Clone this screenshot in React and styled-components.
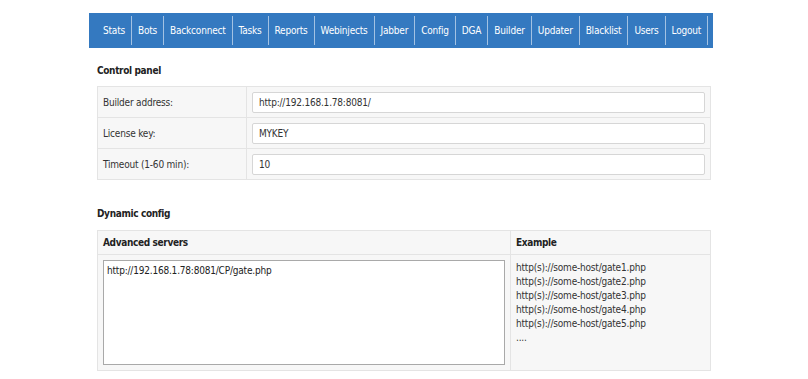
import React from "react";
import styled, { createGlobalStyle } from "styled-components";

const Global = createGlobalStyle`
  html, body { margin: 0; padding: 0; background: #fff; }
  body {
    font-family: "DejaVu Sans Condensed", "DejaVu Sans", sans-serif;
    font-size: 10px;
    letter-spacing: -0.2px;
    color: #333;
  }
`;

const Page = styled.div`
  width: 624px;
  margin: 13px 0 0 89px;
`;

const Nav = styled.nav`
  display: flex;
  align-items: center;
  height: 35px;
  padding: 0 2px 0 8px;
  background: #3479c0;
`;

const NavItem = styled.a`
  display: flex;
  align-items: center;
  height: 29px;
  padding: 0 6px;
  color: #fff;
  font-size: 10px;
  letter-spacing: -0.2px;
  text-decoration: none;
  border-right: 1px solid rgba(255, 255, 255, 0.55);
  white-space: nowrap;
`;

const Content = styled.div`
  padding: 0 2px 0 8px;
`;

const Heading = styled.div`
  font-weight: bold;
  letter-spacing: -0.35px;
  color: #222;
  padding: ${(p) => p.$pad};
`;

const FormTable = styled.div`
  display: grid;
  grid-template-columns: 149px 1fr;
  border: 1px solid #e4e4e4;
  background: #f7f7f7;
`;

const Label = styled.div`
  display: flex;
  align-items: center;
  height: 30px;
  padding: 0 5px;
  border-right: 1px solid #e4e4e4;
  border-bottom: ${(p) => (p.$last ? "none" : "1px solid #e4e4e4")};
`;

const Field = styled.div`
  display: flex;
  align-items: center;
  height: 30px;
  padding: 0 5px;
  border-bottom: ${(p) => (p.$last ? "none" : "1px solid #e4e4e4")};
`;

const Input = styled.input`
  box-sizing: border-box;
  width: 100%;
  height: 21px;
  padding: 0 6px;
  border: 1px solid #d6d6d6;
  border-radius: 2px;
  background: #fff;
  font: inherit;
  letter-spacing: inherit;
  color: #333;
`;

const ConfigTable = styled.div`
  display: grid;
  grid-template-columns: 413px 1fr;
  border: 1px solid #e4e4e4;
  background: #f7f7f7;
`;

const HeadCell = styled.div`
  display: flex;
  align-items: center;
  height: 23px;
  padding: 0 5px;
  font-weight: bold;
  letter-spacing: -0.35px;
  color: #222;
  border-bottom: 1px solid #e4e4e4;
  border-right: ${(p) => (p.$divider ? "1px solid #e4e4e4" : "none")};
`;

const BodyCell = styled.div`
  padding: 5px;
  border-right: ${(p) => (p.$divider ? "1px solid #e4e4e4" : "none")};
`;

const TextArea = styled.textarea`
  display: block;
  box-sizing: border-box;
  width: 100%;
  height: 105px;
  margin: 0;
  padding: 4px 3px;
  border: 1px solid #a9a9a9;
  background: #fff;
  font: inherit;
  letter-spacing: inherit;
  color: #222;
  resize: none;
`;

const Examples = styled.div`
  line-height: 14px;
  padding-top: 1px;
`;

const navItems = [
  "Stats", "Bots", "Backconnect", "Tasks", "Reports", "Webinjects", "Jabber",
  "Config", "DGA", "Builder", "Updater", "Blacklist", "Users", "Logout",
];

const rows = [
  ["Builder address:", "http://192.168.1.78:8081/"],
  ["License key:", "MYKEY"],
  ["Timeout (1-60 min):", "10"],
];

export default function App() {
  return (
    <>
      <Global />
      <Page>
        <Nav>
          {navItems.map((n) => (
            <NavItem key={n} href="#">{n}</NavItem>
          ))}
        </Nav>
        <Content>
          <Heading $pad="17px 0 10px">Control panel</Heading>
          <FormTable>
            {rows.map(([l, v], i) => (
              <React.Fragment key={l}>
                <Label $last={i === rows.length - 1}>{l}</Label>
                <Field $last={i === rows.length - 1}>
                  <Input defaultValue={v} />
                </Field>
              </React.Fragment>
            ))}
          </FormTable>
          <Heading $pad="28px 0 11px">Dynamic config</Heading>
          <ConfigTable>
            <HeadCell $divider>Advanced servers</HeadCell>
            <HeadCell>Example</HeadCell>
            <BodyCell $divider>
              <TextArea defaultValue="http://192.168.1.78:8081/CP/gate.php" />
            </BodyCell>
            <BodyCell>
              <Examples>
                http(s)://some-host/gate1.php<br />
                http(s)://some-host/gate2.php<br />
                http(s)://some-host/gate3.php<br />
                http(s)://some-host/gate4.php<br />
                http(s)://some-host/gate5.php<br />
                ....
              </Examples>
            </BodyCell>
          </ConfigTable>
        </Content>
      </Page>
    </>
  );
}
